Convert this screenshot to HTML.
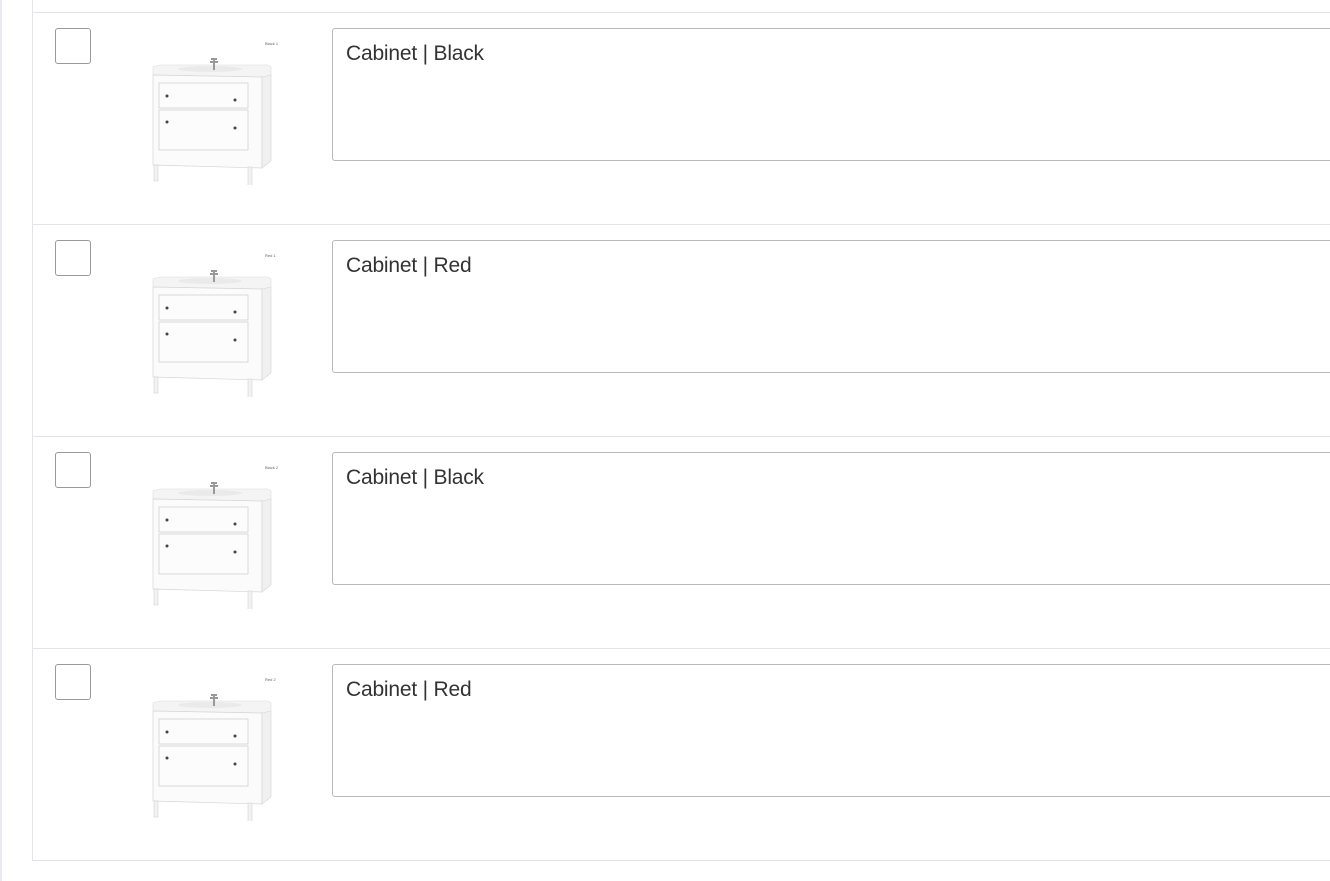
<!DOCTYPE html>
<html><head><meta charset="utf-8"><style>
body{margin:0;background:#fff;width:1330px;height:881px;overflow:hidden;position:relative;font-family:"Liberation Sans",sans-serif}
.lb{position:absolute;left:0;top:0;width:2px;height:881px;background:#eaeaf0}
.wrap{position:absolute;left:32px;top:0;width:1310px;height:860px;border-left:1px solid #e3e3e8;border-bottom:1px solid #e3e3e8}
.row{position:absolute;left:32px;width:1310px;height:211px;border-top:1px solid #e3e3e8}
.cb{position:absolute;left:23px;top:15px;width:36px;height:36px;border:1px solid #9a9a9a;border-radius:3px;box-sizing:border-box}
.img{position:absolute;left:108px;top:22px;width:150px;height:150px}
.ta{position:absolute;left:300px;top:15px;width:1020px;height:133px;border:1px solid #b9b9b9;border-radius:3px;box-sizing:border-box;padding:13px 13px;font-size:21px;color:#333;letter-spacing:-0.2px}
</style></head><body>
<div class="lb"></div>
<div class="wrap"></div>
<div class="row" style="top:12px"><div class="cb"></div><svg class="img" viewBox="0 0 150 150"><use href="#cab"/><text x="125" y="10" font-size="4" fill="#666">Black 1</text></svg><div class="ta">Cabinet | Black</div></div>
<div class="row" style="top:224px"><div class="cb"></div><svg class="img" viewBox="0 0 150 150"><use href="#cab"/><text x="125" y="10" font-size="4" fill="#666">Red 1</text></svg><div class="ta">Cabinet | Red</div></div>
<div class="row" style="top:436px"><div class="cb"></div><svg class="img" viewBox="0 0 150 150"><use href="#cab"/><text x="125" y="10" font-size="4" fill="#666">Black 2</text></svg><div class="ta">Cabinet | Black</div></div>
<div class="row" style="top:648px"><div class="cb"></div><svg class="img" viewBox="0 0 150 150"><use href="#cab"/><text x="125" y="10" font-size="4" fill="#666">Red 2</text></svg><div class="ta">Cabinet | Red</div></div>
<svg width="0" height="0" style="position:absolute"><defs><g id="cab">
<path d="M13 32 L20 30 L128 30 L131 32 L131 40 L124 42 L13 40 Z" fill="#f4f4f4" stroke="#ddd" stroke-width=".6"/>
<ellipse cx="70" cy="34" rx="32" ry="3" fill="#eaeaea"/>
<path d="M13 40 L122 42 L122 133 L13 130 Z" fill="#fbfbfb" stroke="#d6d6d6" stroke-width=".7"/>
<path d="M122 42 L131 40 L131 126 L122 133 Z" fill="#f0f0f0" stroke="#d6d6d6" stroke-width=".6"/>
<rect x="19" y="48" width="89" height="25" fill="#fcfcfc" stroke="#ccc" stroke-width=".7"/>
<rect x="19" y="75" width="89" height="40" fill="#fcfcfc" stroke="#ccc" stroke-width=".7"/>
<circle cx="27" cy="61" r="1.5" fill="#444"/><circle cx="95" cy="65" r="1.5" fill="#444"/>
<circle cx="27" cy="87" r="1.5" fill="#444"/><circle cx="95" cy="93" r="1.5" fill="#444"/>
<rect x="14" y="130" width="4" height="16" fill="#f2f2f2" stroke="#ccc" stroke-width=".5"/>
<rect x="108" y="132" width="4" height="20" fill="#f2f2f2" stroke="#ccc" stroke-width=".5"/>
<path d="M71 24 L77 24 M74 24 L74 35 M70 27 L78 27" stroke="#999" stroke-width="2"/>
</g></defs></svg>
</body></html>
